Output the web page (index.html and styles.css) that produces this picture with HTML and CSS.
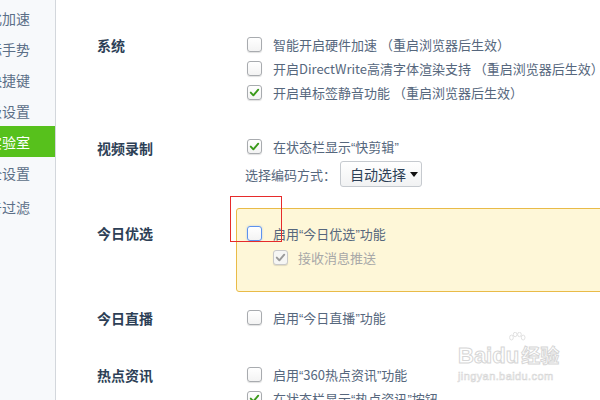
FILE: index.html
```html
<!DOCTYPE html>
<html lang="zh-CN">
<head>
<meta charset="utf-8">
<link rel="stylesheet" href="styles.css">
</head>
<body>
<div class="app">
  <nav class="sidebar">
    <div class="nav-item">优化加速</div>
    <div class="nav-item">鼠标手势</div>
    <div class="nav-item">快捷键</div>
    <div class="nav-item">高级设置</div>
    <div class="nav-item active">实验室</div>
    <div class="nav-item">安全设置</div>
    <div class="nav-item sep">广告过滤</div>
  </nav>
  <main class="main">
    <section class="section s-system">
      <h3 class="label">系统</h3>
      <div class="content">
        <div class="row"><span class="cb"></span><span class="txt">智能开启硬件加速 （重启浏览器后生效）</span></div>
        <div class="row"><span class="cb"></span><span class="txt">开启DirectWrite高清字体渲染支持 （重启浏览器后生效）</span></div>
        <div class="row"><span class="cb checked"><svg viewBox="0 0 15 15"><path d="M3.2 7.6 L6.2 10.8 L11.8 4.2" /></svg></span><span class="txt">开启单标签静音功能 （重启浏览器后生效）</span></div>
      </div>
    </section>
    <section class="section s-video">
      <h3 class="label">视频录制</h3>
      <div class="content">
        <div class="row"><span class="cb checked"><svg viewBox="0 0 15 15"><path d="M3.2 7.6 L6.2 10.8 L11.8 4.2" /></svg></span><span class="txt">在状态栏显示<span class="q">“</span>快剪辑<span class="q">”</span></span></div>
        <div class="select-row">
          <span class="txt">选择编码方式：</span>
          <span class="select">自动选择<span class="caret"></span></span>
        </div>
      </div>
    </section>
    <section class="section s-today">
      <h3 class="label">今日优选</h3>
      <div class="content">
        <div class="yellow-box">
          <div class="row"><span class="cb focus"></span><span class="txt">启用<span class="q">“</span>今日优选<span class="q">”</span>功能</span></div>
          <div class="row sub"><span class="cb checked disabled"><svg viewBox="0 0 15 15"><path d="M3.2 7.6 L6.2 10.8 L11.8 4.2" /></svg></span><span class="txt">接收消息推送</span></div>
        </div>
      </div>
    </section>
    <section class="section s-live">
      <h3 class="label">今日直播</h3>
      <div class="content">
        <div class="row"><span class="cb"></span><span class="txt">启用<span class="q">“</span>今日直播<span class="q">”</span>功能</span></div>
      </div>
    </section>
    <section class="section s-news">
      <h3 class="label">热点资讯</h3>
      <div class="content">
        <div class="row"><span class="cb"></span><span class="txt">启用<span class="q">“</span>360热点资讯<span class="q">”</span>功能</span></div>
        <div class="row"><span class="cb checked"><svg viewBox="0 0 15 15"><path d="M3.2 7.6 L6.2 10.8 L11.8 4.2" /></svg></span><span class="txt">在状态栏显示<span class="q">“</span>热点资讯<span class="q">”</span>按钮</span></div>
      </div>
    </section>
  </main>
  <div class="highlight"></div>
  <div class="watermark">
    <svg class="paw" viewBox="0 0 30 26"><ellipse cx="6" cy="9" rx="3" ry="4"/><ellipse cx="12" cy="4" rx="3" ry="3.6"/><ellipse cx="19" cy="4" rx="3" ry="3.6"/><ellipse cx="25" cy="9" rx="3" ry="4"/></svg>
    <div class="wm-main">Baidu<span class="wm-cn">经验</span></div>
    <div class="wm-url">jingyan.baidu.com</div>
  </div>
</div>
</body>
</html>
```
FILE: styles.css
```css
* { box-sizing: border-box; }
html, body { margin: 0; padding: 0; }
body {
  width: 600px;
  height: 400px;
  overflow: hidden;
  background: #fff;
  font-family: "Noto Sans CJK SC", sans-serif;
  font-size: 13px;
  color: #56677d;
}
.app {
  position: relative;
  display: flex;
  width: 600px;
  height: 400px;
  overflow: hidden;
}
.sidebar {
  flex: 0 0 56px;
  width: 56px;
  height: 400px;
  background: #f7f9fb;
  border-right: 1px solid #d3d7dc;
  padding-top: 2px;
}
.nav-item {
  display: flex;
  justify-content: flex-end;
  align-items: center;
  height: 31px;
  padding-right: 25px;
  font-size: 14px;
  color: #5b6f87;
  white-space: nowrap;
}
.nav-item.active {
  background: #57c11c;
  color: #fff;
}
.nav-item.sep { margin-top: 3px; }

.main {
  flex: 1 0 auto;
  padding-left: 41px;
  padding-top: 32px;
  display: flex;
  flex-direction: column;
}
.section {
  display: grid;
  grid-template-columns: 139px 1fr;
  align-items: start;
}
.label {
  margin: 0;
  font-size: 14px;
  font-weight: bold;
  color: #2d3f56;
  line-height: 24px;
  padding-top: 1px;
}
.content { display: flex; flex-direction: column; }
.row {
  display: flex;
  align-items: center;
  height: 24px;
  padding-left: 11px;
  white-space: nowrap;
}
.cb {
  flex: 0 0 15px;
  width: 15px;
  height: 15px;
  border: 1px solid #a8abaf;
  border-radius: 3px;
  background: linear-gradient(#ffffff, #f3f3f3);
  box-shadow: 0 1px 1px rgba(0,0,0,0.12);
  margin-right: 11px;
  display: flex;
  align-items: center;
  justify-content: center;
}
.cb svg { width: 15px; height: 15px; }
.cb svg path {
  fill: none;
  stroke: #3a9a1a;
  stroke-width: 2.2;
  stroke-linecap: round;
  stroke-linejoin: round;
}
.cb.focus {
  border: 1.5px solid #5d92ee;
  box-shadow: 0 0 2px rgba(93,146,238,0.5);
}
.cb.disabled {
  border-color: #c9c9c9;
  background: #f6f6f4;
}
.cb.disabled svg path { stroke: #9a9a9a; }
.txt { color: #56677d; }
.q {
  font-family: "Liberation Sans", sans-serif;
  font-size: 13px;
}

.s-video { margin-top: 30px; }
.s-video .label { padding-top: 2px; }
.select-row {
  display: flex;
  align-items: center;
  margin-top: 3px;
  padding-left: 9px;
  white-space: nowrap;
}
.select {
  display: inline-flex;
  align-items: center;
  margin-left: 4px;
  height: 26px;
  width: 82px;
  padding-left: 9px;
  border: 1px solid #c6cacf;
  border-radius: 3px;
  background: linear-gradient(#ffffff, #f1f2f3);
  font-size: 14px;
  color: #2d3f56;
}
.caret {
  margin-left: 4px;
  width: 0;
  height: 0;
  border-left: 4px solid transparent;
  border-right: 4px solid transparent;
  border-top: 5px solid #111;
}

.s-today { margin-top: 21px; }
.s-today .label { padding-top: 13px; }
.yellow-box {
  margin-right: -20px;
  height: 84px;
  background: #fef7d8;
  border: 1px solid #e9bb48;
  border-radius: 3px;
  padding-top: 12px;
}
.yellow-box .row { padding-left: 10px; }
.yellow-box .row.sub { padding-left: 36px; }
.row.sub .cb { margin-right: 10px; }
.row.sub .txt { color: #a8a8a8; }

.s-live { margin-top: 13px; }
.s-news { margin-top: 32px; }

.highlight {
  position: absolute;
  left: 230px;
  top: 196px;
  width: 52px;
  height: 46px;
  border: 1px solid #e62b2b;
}

.watermark {
  position: absolute;
  left: 458px;
  top: 332px;
  width: 112px;
  font-family: "Liberation Sans", "Noto Sans CJK SC", sans-serif;
  color: rgba(255,255,255,0.6);
}
.paw {
  position: absolute;
  left: 44px;
  top: 0;
  width: 30px;
  height: 16px;
}
.paw ellipse { fill: none; stroke: #dcdcdc; stroke-width: 1.4; }
.wm-main {
  margin-top: 12px;
  font-size: 22px;
  font-weight: bold;
  line-height: 24px;
  -webkit-text-stroke: 1px #d6d6d6;
  letter-spacing: 0;
}
.wm-cn { font-size: 19px; margin-left: 2px; }
.wm-url {
  font-size: 11px;
  line-height: 14px;
  color: #fff;
  -webkit-text-stroke: 0.6px #d6d6d6;
  letter-spacing: 0.4px;
}
```
